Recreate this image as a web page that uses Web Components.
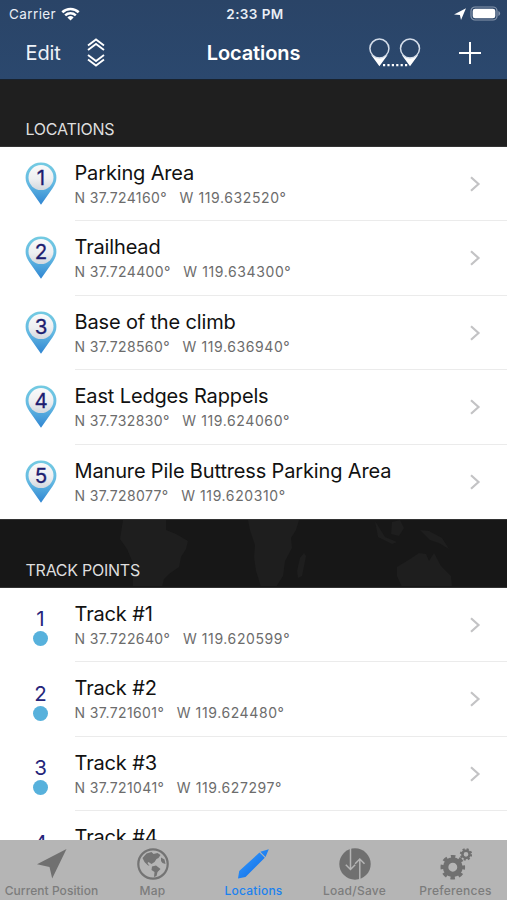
<!DOCTYPE html>
<html lang="en">
<head>
<meta charset="utf-8">
<title>Locations</title>
<style>
html,body{margin:0;height:100%;overflow:hidden;background:#fff;font-family:Inter,"Liberation Sans",sans-serif;-webkit-font-smoothing:antialiased}
</style>
</head>
<body>
<locations-app></locations-app>
<script>
const define = (name, html, fill) => customElements.define(name, class extends HTMLElement {
  connectedCallback() {
    if (this.shadowRoot) return;
    const t = document.createElement('template');
    t.innerHTML = html;
    this.attachShadow({mode: 'open'}).append(t.content.cloneNode(true));
    if (fill) fill(this, this.shadowRoot);
  }
});

define('status-bar', `<style>
:host{display:grid;grid-template-columns:1fr auto 1fr;align-items:center;height:27px;padding:0 6px 0 9px;color:#e9eef5;font-size:13.5px;line-height:16px}
.l,.r{display:flex;align-items:center}
.l{gap:5px;letter-spacing:.4px}.r{justify-content:flex-end;gap:4px}
b{font-weight:600;letter-spacing:.4px;font-size:13.5px}
svg{display:block}
</style>
<div class="l"><span>Carrier</span><svg width="19" height="14" viewBox="0 0 19 14" fill="none" stroke="#fff" stroke-width="2.6"><path d="M1.3 5.2a12 12 0 0 1 16.4 0M4.2 8.4a7.8 7.8 0 0 1 10.6 0"/><path d="M6.4 10.4a4.6 4.6 0 0 1 6.2 0L9.5 13.6z" fill="#fff" stroke="none"/></svg></div>
<b>2:33 PM</b>
<div class="r"><svg width="12" height="12" viewBox="0 0 12 12"><path d="M0 6.4 12 .2 7 11.9 5.9 6.9z" fill="#fff"/></svg>
<svg width="31" height="15" viewBox="0 0 31 15"><rect x="1" y="1" width="26" height="13" rx="4" fill="none" stroke="#8797ae" stroke-width="1.2"/><rect x="2.7" y="2.7" width="22.6" height="9.6" rx="2.4" fill="#fff"/><path d="M28.4 5v5q1.7-.8 1.7-2.5T28.4 5" fill="#8797ae"/></svg></div>`);

define('nav-bar', `<style>
:host{display:grid;grid-template-columns:1fr auto 1fr;align-items:center;height:52px;padding:0 26.5px 0 25.5px;color:#eef2f8;box-sizing:border-box}
.l,.r{display:flex;align-items:center}
.l{gap:26px;font-size:20px;letter-spacing:-.1px}.r{justify-content:flex-end;gap:38px}
h1{margin:0;font-size:20px;line-height:24px;font-weight:600;letter-spacing:-.1px;color:#fff;padding-left:1px;margin-top:-1px}
svg{display:block}.l span{margin-top:-1px}
</style>
<div class="l"><span>Edit</span><svg width="18" height="30" viewBox="0 0 18 30" fill="none" stroke="#fff" stroke-width="1.9"><path d="M1 7.4 9 1.4l8 6M1 12l8-6 8 6M1 17l8 6 8-6M1 21.6l8 6 8-6"/></svg></div>
<h1><slot></slot></h1>
<div class="r"><svg width="53" height="30" viewBox="0 0 53 30"><g id="p"><path d="M3.2 17 11.4 28.2 19.6 17q-8.2 4.5-16.4 0" fill="#fff"/><circle cx="11.4" cy="10.6" r="9.5" fill="#2a4569" stroke="#d3dce9" stroke-width="1.5"/></g><use href="#p" x="30.6"/><path d="M15 27.2h25" stroke="#fff" stroke-width="2.2" stroke-dasharray="2.2 2.2"/></svg>
<svg width="22" height="22" viewBox="0 0 22 22" stroke="#fff" stroke-width="2"><path d="M0 11h22M11 0v22"/></svg></div>`);

define('section-header', `<style>
:host{display:flex;align-items:flex-end;position:relative;box-sizing:border-box;height:68.5px;background:#171717;border-top:1px solid #333;border-bottom:1px solid #333;color:#dedede;font-size:16px;line-height:20px;padding:0 0 7px 25.5px}
:host([plain]){background:#1f1f1f;border-top-color:#18222e;height:67.5px;padding-bottom:7px}
:host([plain]) svg{display:none}
svg{position:absolute;left:0;top:0}span{position:relative;letter-spacing:-.25px}
</style>
<svg width="507" height="66" viewBox="0 0 507 66" fill="#1e1e1e"><path d="M123 0h43v10l10 4 12 7-2 8-5 8-2 10-10 7-5 5-2 8h-29V43l-6-14-7-10zM248 0h51l-3 10-5 8 1 10-7 13-2 15-7 11h-15l-5-16-2-14 1-12-5-15zM304 33l2 3-4 20-4 2-1-7 3-13zM375 1l10 16 12 5-5 2-14-7zM392 2l8-2 4 8-5 8-8-2zM420 10l9 1 13 7 7 11-10-6-9-3zM397 56v-9l13-8 9-6 7 1 3 7 5-8 7 13 10 10 1 11H402z"/></svg><span><slot></slot></span>`);

define('map-pin', `<style>:host{display:block}svg{display:block}text{font:400 20.5px Inter,"Liberation Sans",sans-serif}</style>
<svg width="32" height="43" viewBox="0 0 32 43"><defs><linearGradient id="g" x2="0" y2="1"><stop stop-color="#74cbe2"/><stop offset=".5" stop-color="#64b9e2"/><stop offset="1" stop-color="#2f85d2"/></linearGradient><linearGradient id="h" x2="0" y2="1"><stop stop-color="#fafafa"/><stop offset=".55" stop-color="#eeeff1"/><stop offset="1" stop-color="#d3d8de"/></linearGradient></defs>
<path d="M16 .4A15.3 15.3 0 0 0 .6 15.7c0 4.1 1.6 7.1 3.8 10.6L16 42.8l11.6-16.5c2.2-3.5 3.8-6.5 3.8-10.6A15.3 15.3 0 0 0 16 .4" fill="url(#g)"/><circle cx="16" cy="15.6" r="12.5" fill="url(#h)"/><text x="16" y="23" text-anchor="middle" fill="#1d1d70" stroke="#1d1d70" stroke-width=".3"></text></svg>`,
(h, r) => r.querySelector('text').textContent = h.getAttribute('n'));

define('track-dot', `<style>:host{display:flex;flex-direction:column;align-items:center;gap:0;color:#25257a;font-size:20.5px;line-height:24px}i{width:15px;height:15px;border-radius:50%;background:#57b1dc}</style><span><slot></slot></span><i></i>`);

define('place-row', `<style>
:host{display:grid;grid-template-columns:74.5px 1fr;height:74.5px;box-sizing:border-box;color:#111}
.icon{display:flex;justify-content:center;padding-top:15px;width:81px}
:host([track]) .icon{padding-top:19.5px}
.body{display:grid;grid-template-columns:1fr auto;border-bottom:1.5px solid #ebebeb;box-sizing:border-box;height:74.5px;padding-right:26px}
:host([last]) .body{border:0}
.t{font-size:20px;line-height:26px;padding-top:13px;letter-spacing:-.15px;white-space:nowrap}
.c{font-size:14px;line-height:18px;padding-top:3px;color:#6c6c6c;display:flex;gap:12.5px;letter-spacing:.4px;white-space:nowrap}
.c span+span{letter-spacing:.6px}
svg{display:block;margin-top:29px}
</style><div class="icon"><slot name="icon"></slot></div><div class="body"><div><div class="t"><slot></slot></div><div class="c"></div></div>
<svg width="12" height="16" viewBox="0 0 12 16" fill="none" stroke="#c3c3c5" stroke-width="2.2"><path d="m2 1.2 7.5 6.8L2 14.8"/></svg></div>`,
(h, r) => {
  if (!h.hasAttribute('lat')) { r.querySelector('svg').remove(); return; }
  r.querySelector('.c').innerHTML = `<span>N ${h.getAttribute('lat')}°</span><span>W ${h.getAttribute('lon')}°</span>`;
});

define('tab-item', `<style>
:host{display:flex;flex-direction:column;align-items:center;width:101px;flex:none;color:#7c7c7c;font-size:12px;font-weight:500;line-height:15px;letter-spacing:var(--ls,.25px);white-space:nowrap}
:host([active]){color:#1b82ef}
.i{height:36px;display:flex;align-items:center;margin:5.5px 0 1.5px}
</style><div class="i"><slot name="icon"></slot></div><span><slot></slot></span>`);

define('tab-bar', `<style>
:host{display:flex;height:60px;background:#b5b5b5;justify-content:center}
svg{display:block}
</style>
<tab-item style="--ls:.05px"><svg slot="icon" width="30" height="30" viewBox="0 0 30 30"><path d="M0 15.2 29.5 0 15.2 29.5 12.5 18z" fill="#707070"/></svg>Current Position</tab-item>
<tab-item><svg slot="icon" width="32" height="32" viewBox="0 0 32 32"><circle cx="16" cy="16" r="14.7" fill="none" stroke="#747474" stroke-width="2.2"/><path d="m5.5 10 4-4.5 5-1.5 2 2 4-1 3 2-2 3-2 1-2 3-3 2-3-2-1 1 2 3-2-1-3-3zM15 18.5l4-1 4.5 3.5-3 3-1 4-2.500 1 .5-5-3-2zM24 9.500l3.500 2 1 4.500-3-1-1.500-2z" fill="#747474"/></svg>Map</tab-item>
<tab-item active><svg slot="icon" width="31" height="30" viewBox="0 0 31 30"><defs><linearGradient id="b" x2="1" y2="1"><stop stop-color="#3aa0ff"/><stop offset="1" stop-color="#0865e4"/></linearGradient></defs><path d="M0 29.500 1.200 22 21.500 3.500l5.300 5.300L7.500 28zM22.300 2.800 30.800.300 27.500 8z" fill="url(#b)"/></svg>Locations</tab-item>
<tab-item><svg slot="icon" width="32" height="32" viewBox="0 0 32 32"><circle cx="16" cy="16" r="15.7" fill="#707070"/><path d="M11.5 0v21.5M6.8 16.8l4.700 4.700 4.700-4.700M20.800 32V11M16.100 15.700l4.700-4.700 4.700 4.700" fill="none" stroke="#b5b5b5" stroke-width="1.5"/></svg>Load/Save</tab-item>
<tab-item><svg slot="icon" width="32" height="32" viewBox="0 0 32 32" fill="none" stroke="#707070"><circle cx="12.800" cy="19.200" r="7.200" stroke-width="5.500"/><circle cx="12.800" cy="19.200" r="10.500" stroke-width="3.600" stroke-dasharray="4.400 3.847" stroke-dashoffset="2.200"/><circle cx="26" cy="6.300" r="3.600" stroke-width="2.500"/><circle cx="26" cy="6.300" r="5.200" stroke-width="2" stroke-dasharray="2.100 1.984"/></svg>Preferences</tab-item>`);

define('locations-app', `<style>
:host{display:flex;flex-direction:column;height:900px;width:507px;overflow:hidden}
header{background:linear-gradient(#2a4467,#2b486e);height:79px;flex:none}
main{flex:1;min-height:0;overflow:hidden;background:#fff}
tab-bar{flex:none}
</style>
<header><status-bar></status-bar><nav-bar>Locations</nav-bar></header>
<main>
<section-header plain>LOCATIONS</section-header>
<place-row lat="37.724160" lon="119.632520"><map-pin slot="icon" n="1"></map-pin>Parking Area</place-row>
<place-row lat="37.724400" lon="119.634300"><map-pin slot="icon" n="2"></map-pin>Trailhead</place-row>
<place-row lat="37.728560" lon="119.636940"><map-pin slot="icon" n="3"></map-pin>Base of the climb</place-row>
<place-row lat="37.732830" lon="119.624060"><map-pin slot="icon" n="4"></map-pin>East Ledges Rappels</place-row>
<place-row last lat="37.728077" lon="119.620310"><map-pin slot="icon" n="5"></map-pin>Manure Pile Buttress Parking Area</place-row>
<section-header>TRACK POINTS</section-header>
<place-row track lat="37.722640" lon="119.620599"><track-dot slot="icon">1</track-dot>Track #1</place-row>
<place-row track lat="37.721601" lon="119.624480"><track-dot slot="icon">2</track-dot>Track #2</place-row>
<place-row track lat="37.721041" lon="119.627297"><track-dot slot="icon">3</track-dot>Track #3</place-row>
<place-row track><track-dot slot="icon">4</track-dot>Track #4</place-row>
</main>
<tab-bar></tab-bar>`);
</script>
</body>
</html>
